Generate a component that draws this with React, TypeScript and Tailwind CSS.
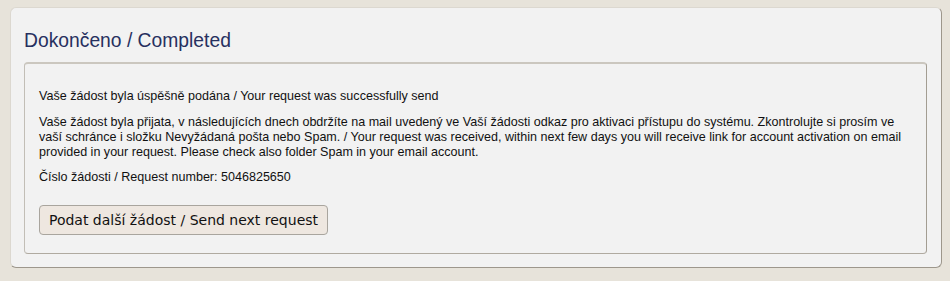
export default function App() {
  return (
    <div className="w-[950px] h-[281px] bg-[#e7e3da] pt-[7px] pl-[10px] pr-[8px] font-['Liberation_Sans',Arial,sans-serif]">
      <div className="h-[261px] rounded-[6px] bg-[#f2f2f2] border border-[#dcd8d0] border-r-[#9d978c] border-b-[#9d978c] pl-[13px] pr-[14px] pt-[22px]">
        <h1 className="text-[19.3px] leading-[22px] text-[#27305f] mb-[10px]">Dokončeno / Completed</h1>

        <div className="h-[192px] rounded-[4px] border border-[#c2beb6] border-t-2 border-t-[#cbc7bf] border-r-[#a39d92] border-b-[#b0aaa0] px-[14px] pt-[25px] text-[12.55px] leading-[15px] text-[#111]">
          <p className="mb-[11px]">Vaše žádost byla úspěšně podána / Your request was successfully send</p>
          <p className="mb-[10px]">
            Vaše žádost byla přijata, v následujících dnech obdržíte na mail uvedený ve Vaší žádosti odkaz pro aktivaci přístupu do systému. Zkontrolujte si prosím ve vaší schránce i složku Nevyžádaná pošta nebo Spam. / Your request was received, within next few days you will receive link for account activation on email provided in your request. Please check also folder Spam in your email account.
          </p>
          <p className="mb-[20px]">Číslo žádosti / Request number: 5046825650</p>
          <button className="h-[30px] w-[289px] rounded-[4px] border border-[#a9a59e] bg-[#eee7e0] font-['DejaVu_Sans',Verdana,sans-serif] text-[14px] text-[#111]">
            Podat další žádost / Send next request
          </button>
        </div>
      </div>
    </div>
  );
}
